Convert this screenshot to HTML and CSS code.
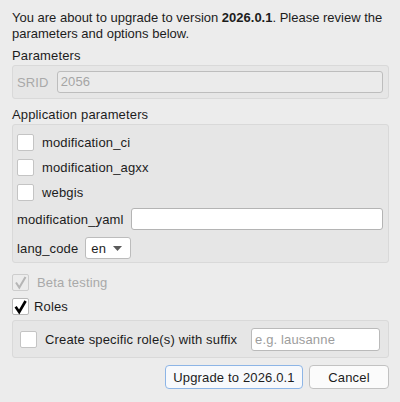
FILE: index.html
```html
<!DOCTYPE html>
<html>
<head>
<meta charset="utf-8">
<link rel="stylesheet" href="styles.css">
</head>
<body>
<div class="dialog">
  <p class="intro">You are about to upgrade to version <b>2026.0.1</b>. Please review the parameters and options below.</p>

  <div class="section-title first">Parameters</div>
  <div class="group params">
    <span class="label disabled">SRID</span>
    <div class="input disabled-input">2056</div>
  </div>

  <div class="section-title">Application parameters</div>
  <div class="group app">
    <label class="check-row"><span class="box"></span><span>modification_ci</span></label>
    <label class="check-row"><span class="box"></span><span>modification_agxx</span></label>
    <label class="check-row"><span class="box"></span><span>webgis</span></label>
    <div class="field-row yaml"><span class="label">modification_yaml</span><div class="input grow"></div></div>
    <div class="field-row lang"><span class="label">lang_code</span>
      <div class="combo"><span>en</span><svg width="9" height="5" viewBox="0 0 9 5"><path d="M0 0 L9 0 L4.5 5 Z" fill="#5a5a5a"/></svg></div>
    </div>
  </div>

  <label class="check-row outer beta"><span class="box box-disabled"><svg width="17" height="17" viewBox="0 0 17 17"><path d="M4 8.5 L7.3 13.5 L13.5 3" fill="none" stroke="#b5b5b5" stroke-width="2"/></svg></span><span class="disabled">Beta testing</span></label>
  <label class="check-row outer roles"><span class="box box-checked"><svg width="17" height="17" viewBox="0 0 17 17"><path d="M3.6 8.8 L7.2 14 L13.6 3" fill="none" stroke="#000" stroke-width="2.6"/></svg></span><span>Roles</span></label>

  <div class="group suffix">
    <label class="check-row inline"><span class="box"></span><span>Create specific role(s) with suffix</span></label>
    <div class="input placeholder">e.g. lausanne</div>
  </div>

  <div class="buttons">
    <button class="btn primary">Upgrade to 2026.0.1</button>
    <button class="btn">Cancel</button>
  </div>
</div>
</body>
</html>
```

FILE: styles.css
```css
html, body {
  margin: 0;
  padding: 0;
  background: #ececec;
}
body {
  font-family: "Liberation Sans", Arial, sans-serif;
  font-size: 13px;
  letter-spacing: 0.15px;
  color: #1c1c1c;
}
.dialog {
  width: 377px;
  padding: 10px 11px 0 12px;
  display: flex;
  flex-direction: column;
}
.intro {
  margin: 0;
  line-height: 16px;
  letter-spacing: 0;
  margin-right: -3px;
}
.intro b {
  font-weight: bold;
}
.section-title {
  line-height: 16px;
  margin-top: 8px;
}
.section-title.first {
  margin-top: 6px;
}
.group {
  background: #e6e6e6;
  border: 1px solid #d9d9d9;
  border-radius: 3px;
  margin-top: 1px;
}
.params {
  display: flex;
  align-items: center;
  padding: 5px 5px 5px 4px;
  height: 22px;
}
.label {
  white-space: nowrap;
}
.disabled {
  color: #a9a9a9;
}
.params .label {
  margin-right: 8px;
}
.input {
  box-sizing: border-box;
  height: 22px;
  border: 1px solid #b4b4b4;
  border-radius: 3px;
  background: #fff;
  padding: 0 3px;
  line-height: 20px;
}
.disabled-input {
  flex: 1;
  background: #ebebeb;
  border-color: #bdbdbd;
  color: #a5a5a5;
}
.app {
  padding: 5px 5px 3px 4px;
  display: flex;
  flex-direction: column;
}
.check-row {
  display: flex;
  align-items: center;
  height: 25px;
}
.box {
  box-sizing: border-box;
  width: 17px;
  height: 17px;
  background: #fff;
  border: 1px solid #c4c4c4;
  border-radius: 2px;
  margin-right: 8px;
  flex: none;
  position: relative;
}
.box svg {
  position: absolute;
  left: -1px;
  top: -1px;
}
.box-disabled {
  background: #ececec;
  border-color: #cdcdcd;
}
.box-checked {
  border-color: #b8b8b8;
}
.field-row {
  display: flex;
  align-items: center;
}
.yaml {
  margin-top: 3px;
}
.yaml .label {
  margin-right: 7px;
}
.grow {
  flex: 1;
}
.lang {
  margin-top: 7px;
}
.lang .label {
  margin-right: 7px;
}
.combo {
  box-sizing: border-box;
  width: 46px;
  height: 22px;
  border: 1px solid #bcbcbc;
  border-radius: 3px;
  background: #fff;
  display: flex;
  align-items: center;
  justify-content: space-between;
  padding: 0 8px 0 5px;
}
.outer {
  height: 24px;
}
.beta {
  margin-top: 7px;
}
.roles .box {
  margin-right: 5px;
}
.suffix {
  margin-top: 2px;
  padding: 7px 8px 6px 7px;
  display: flex;
  align-items: center;
  justify-content: space-between;
}
.inline {
  height: 23px;
}
.placeholder {
  width: 129px;
  height: 23px;
  color: #9d9d9d;
  border-color: #bababa;
  line-height: 21px;
}
.buttons {
  display: flex;
  justify-content: flex-end;
  gap: 6px;
  margin-top: 7px;
}
.btn {
  font-family: inherit;
  font-size: 13px;
  letter-spacing: 0.15px;
  color: #1c1c1c;
  height: 24px;
  border: 1px solid #c2c2c2;
  border-radius: 4px;
  background: #fbfbfb;
  padding: 0;
  width: 80px;
}
.btn.primary {
  width: 138px;
  border-color: #8db5e6;
  background: #f7f9fc;
}
```
